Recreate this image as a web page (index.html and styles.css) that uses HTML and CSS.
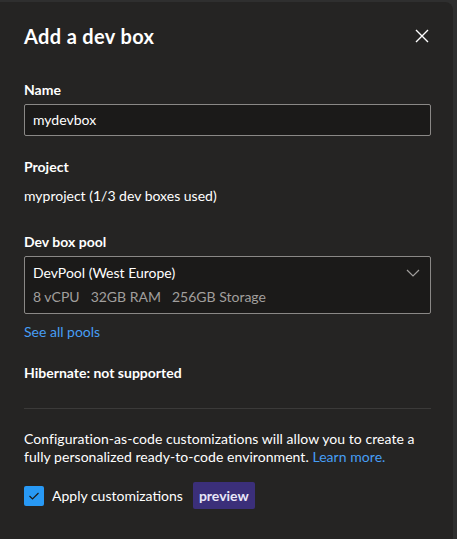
FILE: index.html
```html
<!DOCTYPE html>
<html>
<head>
<meta charset="utf-8">
<link rel="stylesheet" href="styles.css">
</head>
<body>
<div class="panel">
  <div class="header">
    <h1 class="title">Add a dev box</h1>
    <button class="close" aria-label="Close">
      <svg width="14" height="14" viewBox="0 0 14 14"><path d="M1 1L13 13M13 1L1 13" stroke="#ffffff" stroke-width="1.4" fill="none"/></svg>
    </button>
  </div>
  <div class="field">
    <div class="label">Name</div>
    <div class="input">mydevbox</div>
  </div>
  <div class="field project">
    <div class="label">Project</div>
    <div class="value">myproject (1/3 dev boxes used)</div>
  </div>
  <div class="field pool">
    <div class="label">Dev box pool</div>
    <div class="dropdown">
      <div class="dd-text">
        <div class="dd-main">DevPool (West Europe)</div>
        <div class="dd-sub"><span>8 vCPU</span><span>32GB RAM</span><span>256GB Storage</span></div>
      </div>
      <svg class="chev" width="14" height="8" viewBox="0 0 14 8"><path d="M1 1L7 7L13 1" stroke="#a19f9d" stroke-width="1.2" fill="none"/></svg>
    </div>
    <a class="link pools">See all pools</a>
  </div>
  <div class="label hibernate">Hibernate: not supported</div>
  <div class="divider"></div>
  <div class="desc">
    <div class="desc-line">Configuration-as-code customizations will allow you to create a</div>
    <div class="desc-line">fully personalized ready-to-code environment. <a class="link">Learn more.</a></div>
  </div>
  <div class="check-row">
    <span class="checkbox"><svg width="12" height="10" viewBox="0 0 12 10"><path d="M1.5 5L4.5 8L10.5 2" stroke="#1b1a19" stroke-width="1.2" fill="none"/></svg></span>
    <span class="check-label">Apply customizations</span>
    <span class="badge">preview</span>
  </div>
</div>
</body>
</html>
```
FILE: styles.css
```css
html, body {
  margin: 0;
  padding: 0;
  background: #2f2f2f;
  height: 100%;
}
body {
  font-family: "Segoe UI", Lato, "Noto Sans", sans-serif;
  font-size: 14px;
  color: #ffffff;
  padding-top: 2px;
  box-sizing: border-box;
}
.panel {
  background: #252423;
  margin-right: 4px;
  border-top-right-radius: 8px;
  height: 537px;
  box-sizing: border-box;
  padding: 0 22px 0 24px;
}
.header {
  display: flex;
  align-items: center;
  justify-content: space-between;
  height: 68px;
}
.title {
  margin: 0;
  font-size: 20px;
  font-weight: 700;
  line-height: 28px;
  letter-spacing: 0.35px;
}
.close {
  background: none;
  border: none;
  padding: 0;
  margin-right: 2px;
  display: flex;
}
.field { display: flex; flex-direction: column; }
.label {
  font-weight: 700;
  line-height: 20px;
  margin-top: 10px;
}
.input {
  margin-top: 4px;
  height: 32px;
  box-sizing: border-box;
  border: 1px solid #8a8886;
  border-radius: 2px;
  background: #1b1a19;
  padding: 0 8px;
  line-height: 30px;
}
.project .label { margin-top: 21px; }
.value { margin-top: 9px; line-height: 20px; }
.pool .label { margin-top: 26px; }
.dropdown {
  margin-top: 4px;
  height: 58px;
  box-sizing: border-box;
  border: 1px solid #8a8886;
  border-radius: 2px;
  background: #1b1a19;
  padding: 6px 8px;
  display: flex;
  justify-content: space-between;
  align-items: flex-start;
}
.dd-main { line-height: 20px; }
.dd-sub {
  color: #a19f9d;
  line-height: 20px;
  margin-top: 4px;
  display: flex;
  gap: 11px;
}
.chev { margin-top: 6px; margin-right: 2px; }
.link { color: #479ef5; text-decoration: none; }
.pools { margin-top: 8px; line-height: 20px; }
.hibernate { margin-top: 21px; }
.divider {
  height: 1px;
  background: #3b3a39;
  margin-top: 25px;
}
.desc {
  margin-top: 21px;
  line-height: 18px;
  letter-spacing: 0.05px;
  display: flex;
  flex-direction: column;
}
.desc-line { white-space: nowrap; }
.check-row {
  display: flex;
  align-items: center;
  margin-top: 16px;
}
.checkbox {
  width: 20px;
  height: 20px;
  border-radius: 2px;
  background: #2899f5;
  display: flex;
  align-items: center;
  justify-content: center;
}
.check-label { margin-left: 8px; }
.badge {
  margin-left: 10px;
  background: #3b2f7a;
  border-radius: 2px;
  padding: 0 6px;
  line-height: 27px;
  font-weight: 700;
  color: #e8e6f8;
}
```
